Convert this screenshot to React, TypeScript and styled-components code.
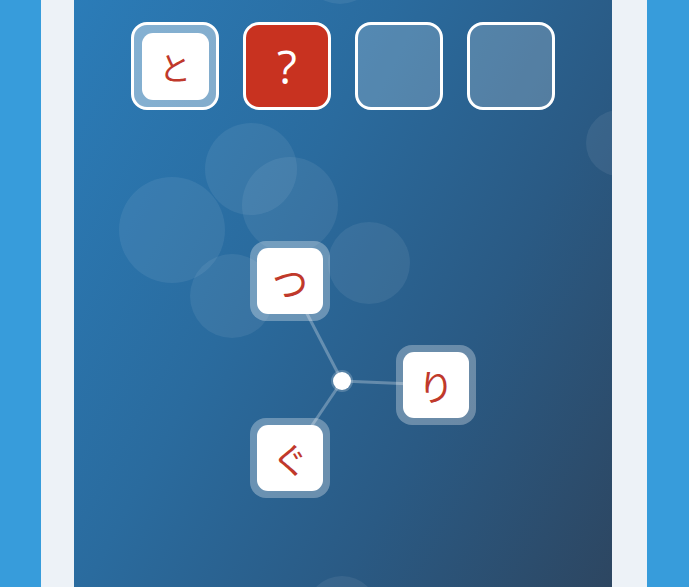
import styled, { createGlobalStyle } from 'styled-components';

const GlobalStyle = createGlobalStyle`
  html, body {
    margin: 0;
    padding: 0;
  }
  body {
    font-family: "Noto Sans CJK JP", "Noto Sans", sans-serif;
  }
`;

type TileKind = 'solved' | 'current' | 'empty';

const tiles: { kind: TileKind; text?: string }[] = [
  { kind: 'solved', text: 'と' },
  { kind: 'current', text: '?' },
  { kind: 'empty' },
  { kind: 'empty' },
];

const bubbles = [
  { x: 177, y: 169, r: 46 },
  { x: 216, y: 205, r: 48 },
  { x: 98, y: 230, r: 53 },
  { x: 158, y: 296, r: 42 },
  { x: 295, y: 263, r: 41 },
  { x: 545, y: 143, r: 33 },
  { x: 268, y: 612, r: 36 },
  { x: 266, y: -34, r: 38 },
];

// board coordinates (board starts under the tile row, 110px from top)
const hub = { x: 268, y: 271 };
const nodes = [
  { x: 216, y: 171, text: 'つ' },
  { x: 362, y: 275, text: 'り' },
  { x: 216, y: 348, text: 'ぐ' },
];

const App = () => {
  return (
    <>
      <GlobalStyle />
      <Page>
        <Frame>
          <Screen>
            {bubbles.map((b, i) => (
              <Bubble key={i} $x={b.x} $y={b.y} $r={b.r} />
            ))}
            <TileRow>
              {tiles.map((t, i) => (
                <Tile key={i} $kind={t.kind}>
                  {t.kind === 'solved' && <TileFace>{t.text}</TileFace>}
                  {t.kind === 'current' && <Question>{t.text}</Question>}
                </Tile>
              ))}
            </TileRow>
            <Board>
              <Links width="538" height="477">
                {nodes.map((n, i) => (
                  <line
                    key={i}
                    x1={hub.x}
                    y1={hub.y}
                    x2={n.x}
                    y2={n.y}
                    stroke="rgba(255,255,255,0.28)"
                    strokeWidth="3"
                  />
                ))}
                <circle cx={hub.x} cy={hub.y} r="11" fill="rgba(255,255,255,0.2)" />
                <circle cx={hub.x} cy={hub.y} r="9" fill="#ffffff" />
              </Links>
              {nodes.map((n, i) => (
                <Node key={i} $x={n.x} $y={n.y}>
                  <NodeFace>{n.text}</NodeFace>
                </Node>
              ))}
            </Board>
          </Screen>
        </Frame>
      </Page>
    </>
  );
};

const Page = styled.div`
  display: flex;
  width: 689px;
  height: 587px;
  box-sizing: border-box;
  padding: 0 42px 0 41px;
  background: #379cdb;
  overflow: hidden;
`;

const Frame = styled.div`
  flex: 1;
  display: flex;
  padding: 0 35px 0 33px;
  background: #edf2f7;
`;

const Screen = styled.div`
  position: relative;
  flex: 1;
  overflow: hidden;
  background: linear-gradient(
    118deg,
    #2b7cb8 0%,
    #2a6b9e 38%,
    #2a5a84 68%,
    #2d4661 100%
  );
`;

const Bubble = styled.div<{ $x: number; $y: number; $r: number }>`
  position: absolute;
  left: ${(p) => p.$x - p.$r}px;
  top: ${(p) => p.$y - p.$r}px;
  width: ${(p) => p.$r * 2}px;
  height: ${(p) => p.$r * 2}px;
  border-radius: 50%;
  background: rgba(255, 255, 255, 0.07);
`;

const TileRow = styled.div`
  position: relative;
  display: flex;
  justify-content: center;
  gap: 24px;
  padding-top: 22px;
`;

const Tile = styled.div<{ $kind: TileKind }>`
  width: 88px;
  height: 88px;
  box-sizing: border-box;
  border: 3.5px solid #ffffff;
  border-radius: 16px;
  display: flex;
  align-items: center;
  justify-content: center;
  background: ${(p) =>
    p.$kind === 'current'
      ? '#c83220'
      : p.$kind === 'solved'
      ? 'rgba(255, 255, 255, 0.42)'
      : 'rgba(255, 255, 255, 0.2)'};
`;

const TileFace = styled.div`
  width: 67px;
  height: 67px;
  border-radius: 11px;
  background: #ffffff;
  display: flex;
  align-items: center;
  justify-content: center;
  color: #c0392b;
  font-size: 32px;
  font-weight: 400;
  line-height: 1;
`;

const Question = styled.span`
  color: #ffffff;
  font-family: "Open Sans", "Noto Sans", sans-serif;
  font-size: 46px;
  font-weight: 500;
  line-height: 1;
`;

const Board = styled.div`
  position: relative;
  height: 477px;
`;

const Links = styled.svg`
  position: absolute;
  left: 0;
  top: 0;
`;

const Node = styled.div<{ $x: number; $y: number }>`
  position: absolute;
  left: ${(p) => p.$x - 40}px;
  top: ${(p) => p.$y - 40}px;
  width: 80px;
  height: 80px;
  box-sizing: border-box;
  padding: 7px;
  border-radius: 16px;
  background: rgba(255, 255, 255, 0.3);
`;

const NodeFace = styled.div`
  width: 100%;
  height: 100%;
  border-radius: 11px;
  background: #ffffff;
  display: flex;
  align-items: center;
  justify-content: center;
  color: #c0392b;
  font-size: 36px;
  font-weight: 400;
  line-height: 1;
`;

export default App;
